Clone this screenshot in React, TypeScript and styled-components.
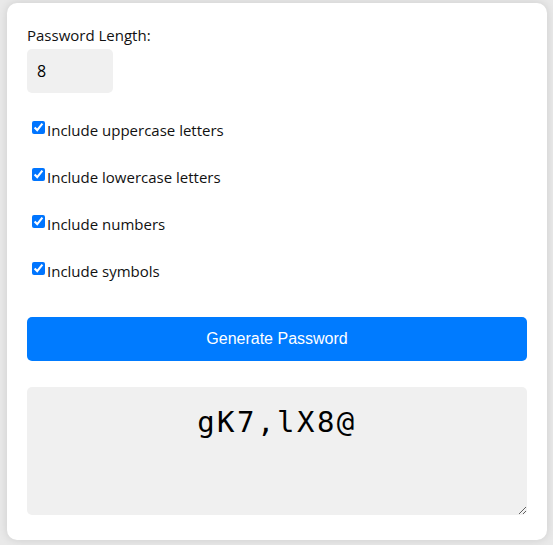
import React, { useState } from 'react';
import styled, { createGlobalStyle } from 'styled-components';

const GlobalStyle = createGlobalStyle`
	body {
		margin: 0;
		background: #e9e9e9;
		font-family: "Open Sans", "Noto Sans", sans-serif;
	}
`;

type Option = {
	key: string;
	label: string;
};

const OPTIONS: Option[] = [
	{ key: 'upper', label: 'Include uppercase letters' },
	{ key: 'lower', label: 'Include lowercase letters' },
	{ key: 'numbers', label: 'Include numbers' },
	{ key: 'symbols', label: 'Include symbols' },
];

export default function App(): JSX.Element {
	const [length, setLength] = useState('8');
	const [checked, setChecked] = useState<Record<string, boolean>>({
		upper: true,
		lower: true,
		numbers: true,
		symbols: true,
	});
	const [password] = useState('gK7,lX8@');

	function toggle(key: string) {
		setChecked({ ...checked, [key]: !checked[key] });
	}

	return (
		<>
			<GlobalStyle />
			<Page>
				<Card>
					<FieldLabel htmlFor="len">Password Length:</FieldLabel>
					<LengthInput id="len" value={length} onChange={e => setLength(e.target.value)} />
					<Options>
						{OPTIONS.map(o => (
							<OptionRow key={o.key}>
								<Check type="checkbox" checked={checked[o.key]} onChange={() => toggle(o.key)} />
								{o.label}
							</OptionRow>
						))}
					</Options>
					<GenerateButton>Generate Password</GenerateButton>
					<Output value={password} readOnly />
				</Card>
			</Page>
		</>
	);
}

const Page = styled.div`
	padding: 3px 6px 7px 7px;
`;

const Card = styled.div`
	background: #fff;
	border-radius: 10px;
	box-shadow: 0 0 10px rgba(0, 0, 0, 0.12);
	padding: 20px 20px 25px;
	display: flex;
	flex-direction: column;
	align-items: flex-start;
`;

const FieldLabel = styled.label`
	font-size: 15px;
	line-height: 22px;
	color: #111;
	margin-top: 1px;
`;

const LengthInput = styled.input`
	box-sizing: border-box;
	width: 86px;
	height: 44px;
	margin-top: 3px;
	padding: 0 10px;
	border: none;
	border-radius: 5px;
	background: #f0f0f0;
	font-family: "Open Sans", "Noto Sans", sans-serif;
	font-size: 16px;
	color: #000;
	outline: none;
`;

const Options = styled.div`
	margin-top: 13px;
	display: flex;
	flex-direction: column;
	align-self: stretch;
`;

const OptionRow = styled.label`
	height: 47px;
	display: flex;
	align-items: center;
	font-size: 15px;
	color: #111;
	padding-left: 5px;
`;

const Check = styled.input`
	width: 13px;
	height: 13px;
	margin: 0 2px 0 0;
	position: relative;
	top: -2px;
`;

const GenerateButton = styled.button`
	align-self: stretch;
	margin-top: 23px;
	height: 44px;
	border: none;
	border-radius: 5px;
	background: #007bff;
	color: #fff;
	font-family: "Liberation Sans", Arial, sans-serif;
	font-size: 16px;
	cursor: pointer;
`;

const Output = styled.textarea`
	align-self: stretch;
	box-sizing: border-box;
	margin-top: 26px;
	height: 128px;
	padding: 18px 10px;
	border: none;
	border-radius: 5px;
	background: #f0f0f0;
	font-family: "DejaVu Sans Mono", monospace;
	font-size: 29px;
	letter-spacing: 2.5px;
	text-align: center;
	color: #000;
	outline: none;
`;
